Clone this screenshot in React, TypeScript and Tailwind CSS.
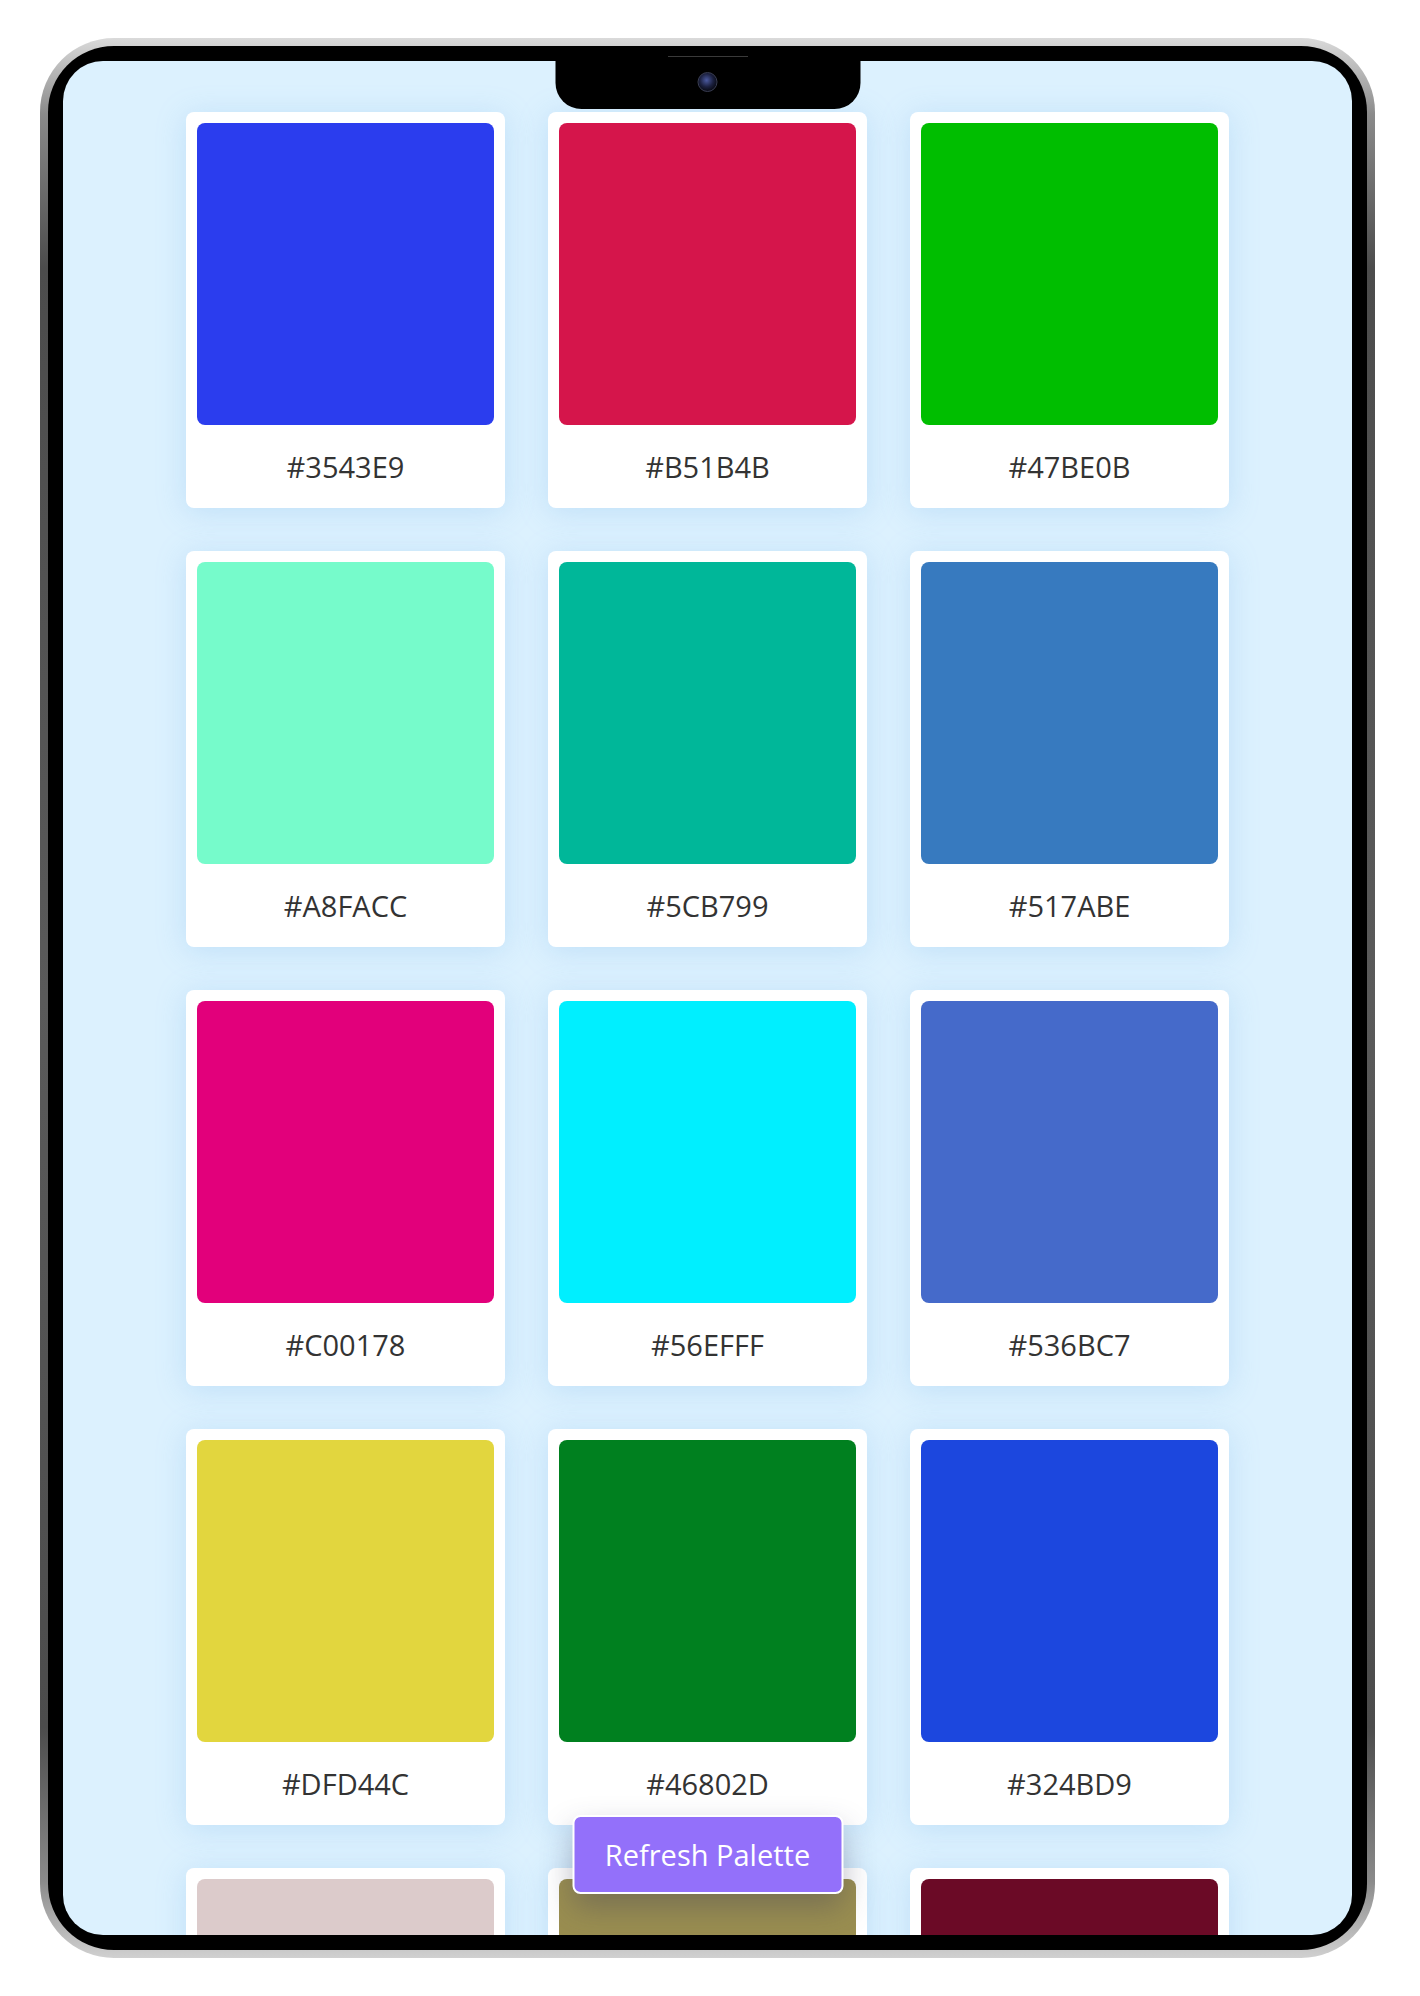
const swatches = [
  { hex: "#3543E9", shown: "#2b3dee" },
  { hex: "#B51B4B", shown: "#d5154b" },
  { hex: "#47BE0B", shown: "#00be00" },
  { hex: "#A8FACC", shown: "#76fbcb" },
  { hex: "#5CB799", shown: "#00b799" },
  { hex: "#517ABE", shown: "#377abf" },
  { hex: "#C00178", shown: "#e2007b" },
  { hex: "#56EFFF", shown: "#00efff" },
  { hex: "#536BC7", shown: "#456aca" },
  { hex: "#DFD44C", shown: "#e2d63e" },
  { hex: "#46802D", shown: "#00801f" },
  { hex: "#324BD9", shown: "#1c47de" },
  { hex: "#DCCBCB", shown: "#dccbcb" },
  { hex: "#9A8E50", shown: "#9a8e50" },
  { hex: "#6B0A26", shown: "#6b0a26" },
];

function ColorCard({ hex, shown }: { hex: string; shown: string }) {
  return (
    <div className="flex flex-col rounded-[8px] bg-white p-[11px] pb-0 shadow-[0_4px_30px_rgba(120,180,235,0.28)]">
      <div
        className="h-[302px] w-full rounded-[8px]"
        style={{ backgroundColor: shown }}
      />
      <p className="flex h-[83px] items-center justify-center text-[29px] text-[#333]">
        {hex}
      </p>
    </div>
  );
}

export default function App() {
  return (
    <div className="min-h-[1996px] bg-white pl-[40px] pt-[38px] font-['Open_Sans',sans-serif]">
      <div className="relative h-[1920px] w-[1335px] rounded-[74px] bg-[linear-gradient(180deg,#dadada_0%,#8a8a8a_4%,#4c4c4c_12%,#5a5a5a_50%,#4c4c4c_88%,#8a8a8a_96%,#d0d0d0_100%)] p-[8px]">
        <div className="relative h-full w-full rounded-[66px] bg-black p-[15px]">
          {/* speaker slit */}
          <div className="absolute left-1/2 top-[10px] h-[1px] w-[80px] -translate-x-1/2 bg-[#3a3a3a]" />

          <div className="relative h-full w-full overflow-hidden rounded-[40px] bg-[#dcf1fe]">
            {/* notch */}
            <div className="absolute left-1/2 top-0 z-20 flex h-[48px] w-[305px] -translate-x-1/2 items-start justify-center rounded-b-[26px] bg-black">
              <div className="mt-[11px] h-[20px] w-[20px] rounded-full border border-[#3b3f55] bg-[radial-gradient(circle_at_45%_40%,#4b5aa0_0%,#1c2140_45%,#05060c_80%)]" />
            </div>

            <div className="mx-auto grid w-[1043px] grid-cols-3 gap-[43px] pt-[51px]">
              {swatches.map((s) => (
                <ColorCard key={s.hex} hex={s.hex} shown={s.shown} />
              ))}
            </div>

            <button className="absolute bottom-[41px] left-1/2 z-10 flex h-[79px] w-[271px] -translate-x-1/2 items-center justify-center rounded-[8px] border-2 border-white bg-[#9370fa] text-[29px] text-white shadow-[0_14px_30px_rgba(60,60,90,0.35)]">
              Refresh Palette
            </button>
          </div>
        </div>
      </div>
    </div>
  );
}
